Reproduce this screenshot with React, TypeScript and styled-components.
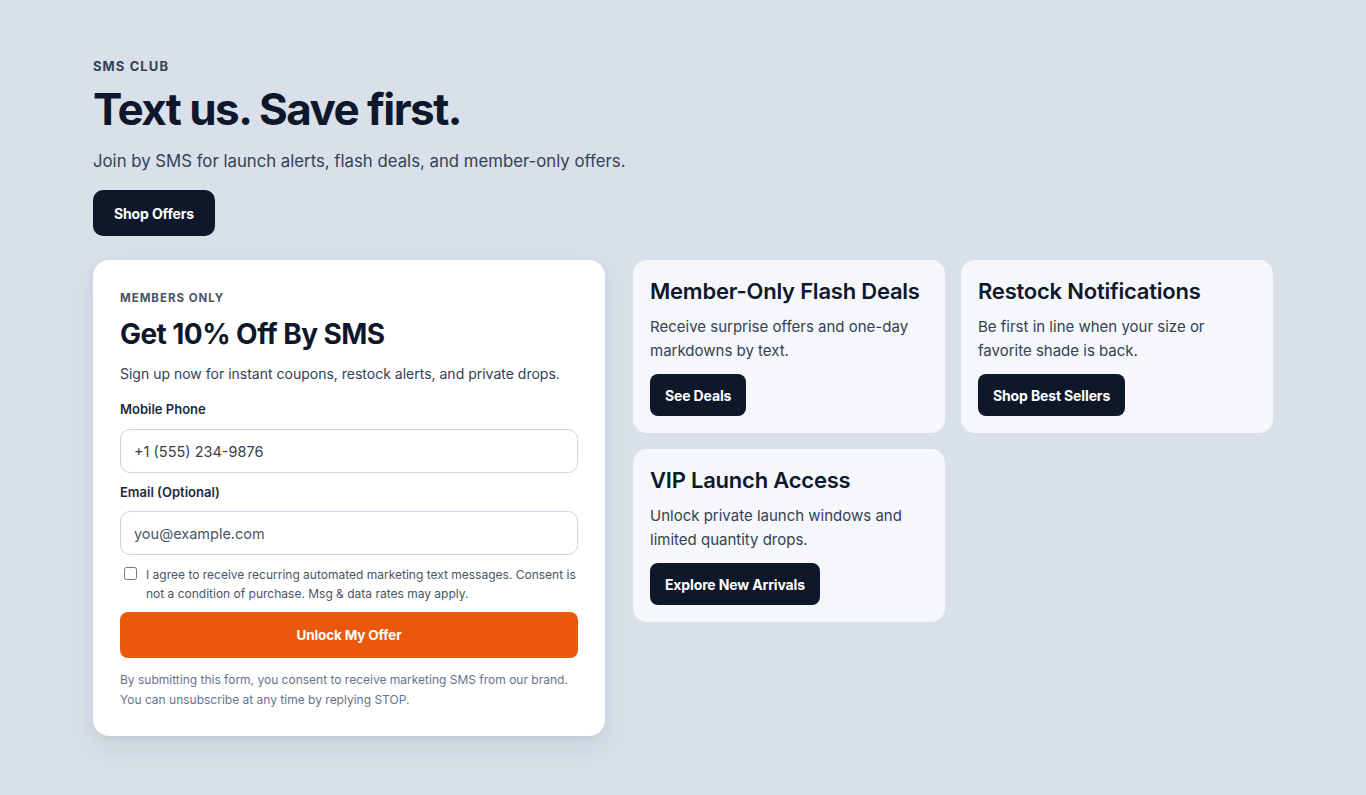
import React from "react";
import styled, { createGlobalStyle } from "styled-components";

const GlobalStyle = createGlobalStyle`
  * { box-sizing: border-box; }
  html, body {
    margin: 0;
    padding: 0;
    background: #d9e0ea;
    font-family: Inter, "Noto Sans", sans-serif;
    color: #0f172a;
  }
`;

const Page = styled.main`
  max-width: 1180px;
  margin: 0 auto;
  padding: 57px 0 60px;
`;

const Hero = styled.header`
  display: flex;
  flex-direction: column;
  align-items: flex-start;
`;

const Eyebrow = styled.p<{ $small?: boolean }>`
  margin: 0;
  font-size: ${(p) => (p.$small ? "11.5px" : "13px")};
  font-weight: 700;
  letter-spacing: 0.085em;
  text-transform: uppercase;
  color: ${(p) => (p.$small ? "#475569" : "#334155")};
  line-height: 18px;
`;

const Title = styled.h1`
  margin: 8px 0 0;
  font-size: 44px;
  font-weight: 700;
  letter-spacing: -0.035em;
  line-height: 52px;
  color: #0f172a;
`;

const Lead = styled.p`
  margin: 13px 0 0;
  font-size: 16.75px;
  line-height: 26px;
  color: #334155;
`;

const DarkButton = styled.button<{ $size?: "lg" | "md" }>`
  border: 0;
  background: #0f172a;
  color: #fff;
  font-family: inherit;
  font-weight: 700;
  font-size: 14px;
  letter-spacing: -0.01em;
  border-radius: ${(p) => (p.$size === "lg" ? "10px" : "8px")};
  height: ${(p) => (p.$size === "lg" ? "46px" : "42px")};
  padding: 0 ${(p) => (p.$size === "lg" ? "21px" : "15px")};
  cursor: pointer;
`;

const HeroButton = styled(DarkButton)`
  margin-top: 16px;
`;

const Layout = styled.section`
  display: grid;
  grid-template-columns: 512px 1fr;
  gap: 28px;
  margin-top: 24px;
  align-items: start;
`;

const FormCard = styled.form`
  background: #fff;
  border-radius: 16px;
  padding: 29px 27px 26px;
  box-shadow: 0 12px 30px rgba(15, 23, 42, 0.08), 0 2px 6px rgba(15, 23, 42, 0.04);
  display: flex;
  flex-direction: column;
`;

const FormTitle = styled.h2`
  margin: 9px 0 0;
  font-size: 28px;
  font-weight: 700;
  letter-spacing: -0.02em;
  line-height: 36px;
  color: #0f172a;
`;

const FormLead = styled.p`
  margin: 11px 0 0;
  font-size: 14px;
  line-height: 22px;
  color: #334155;
`;

const Field = styled.label`
  display: flex;
  flex-direction: column;
  gap: 11px;
  margin-top: 11px;
  font-size: 13px;
  font-weight: 600;
  color: #1e293b;
  &:first-of-type { margin-top: 16px; }
`;

const Input = styled.input`
  height: 44px;
  width: 100%;
  border: 1px solid #cbd5e1;
  border-radius: 10px;
  padding: 0 13px;
  font-family: inherit;
  font-size: 14.5px;
  color: #374151;
  background: #fff;
  outline: none;
  &::placeholder { color: #4b5563; }
`;

const PhoneInput = styled(Input)`
  margin-top: 1px;
`;

const Consent = styled.label`
  display: flex;
  align-items: flex-start;
  gap: 9px;
  margin-top: 10px;
  padding-left: 4px;
  font-size: 12px;
  line-height: 19px;
  color: #475569;

  input {
    margin: 2px 0 0;
    width: 13px;
    height: 13px;
    flex: none;
  }
`;

const SubmitButton = styled.button`
  margin-top: 9px;
  height: 46px;
  width: 100%;
  border: 0;
  border-radius: 8px;
  background: #ea580c;
  color: #fff;
  font-family: inherit;
  font-size: 13.5px;
  font-weight: 700;
  letter-spacing: -0.01em;
  cursor: pointer;
`;

const Fineprint = styled.p`
  margin: 12px 0 0;
  font-size: 12px;
  line-height: 20px;
  color: #64748b;
`;

const CardGrid = styled.div`
  display: grid;
  grid-template-columns: repeat(2, 1fr);
  gap: 16px;
`;

const FeatureCard = styled.article`
  background: #f5f7fa;
  border-radius: 14px;
  padding: 17px;
  display: flex;
  flex-direction: column;
  align-items: flex-start;
`;

const CardTitle = styled.h3`
  margin: 0;
  font-size: 22px;
  font-weight: 600;
  letter-spacing: -0.01em;
  line-height: 28px;
  color: #0f172a;
`;

const CardText = styled.p`
  margin: 10px 0 0;
  font-size: 15px;
  line-height: 24px;
  color: #334155;
`;

const CardButton = styled(DarkButton)`
  margin-top: 11px;
`;

const features = [
  {
    title: "Member-Only Flash Deals",
    text: "Receive surprise offers and one-day markdowns by text.",
    cta: "See Deals",
  },
  {
    title: "Restock Notifications",
    text: "Be first in line when your size or favorite shade is back.",
    cta: "Shop Best Sellers",
  },
  {
    title: "VIP Launch Access",
    text: "Unlock private launch windows and limited quantity drops.",
    cta: "Explore New Arrivals",
  },
];

export default function App() {
  return (
    <>
      <GlobalStyle />
      <Page>
        <Hero>
          <Eyebrow>SMS Club</Eyebrow>
          <Title>Text us. Save first.</Title>
          <Lead>Join by SMS for launch alerts, flash deals, and member-only offers.</Lead>
          <HeroButton $size="lg">Shop Offers</HeroButton>
        </Hero>

        <Layout>
          <FormCard onSubmit={(e) => e.preventDefault()}>
            <Eyebrow $small>Members Only</Eyebrow>
            <FormTitle>Get 10% Off By SMS</FormTitle>
            <FormLead>Sign up now for instant coupons, restock alerts, and private drops.</FormLead>

            <Field>
              Mobile Phone
              <PhoneInput type="tel" defaultValue="+1 (555) 234-9876" />
            </Field>
            <Field>
              Email (Optional)
              <Input type="email" placeholder="you@example.com" />
            </Field>

            <Consent>
              <input type="checkbox" />
              <span>
                I agree to receive recurring automated marketing text messages. Consent is not a
                condition of purchase. Msg &amp; data rates may apply.
              </span>
            </Consent>

            <SubmitButton type="submit">Unlock My Offer</SubmitButton>

            <Fineprint>
              By submitting this form, you consent to receive marketing SMS from our brand. You can
              unsubscribe at any time by replying STOP.
            </Fineprint>
          </FormCard>

          <CardGrid>
            {features.map((f) => (
              <FeatureCard key={f.title}>
                <CardTitle>{f.title}</CardTitle>
                <CardText>{f.text}</CardText>
                <CardButton>{f.cta}</CardButton>
              </FeatureCard>
            ))}
          </CardGrid>
        </Layout>
      </Page>
    </>
  );
}
